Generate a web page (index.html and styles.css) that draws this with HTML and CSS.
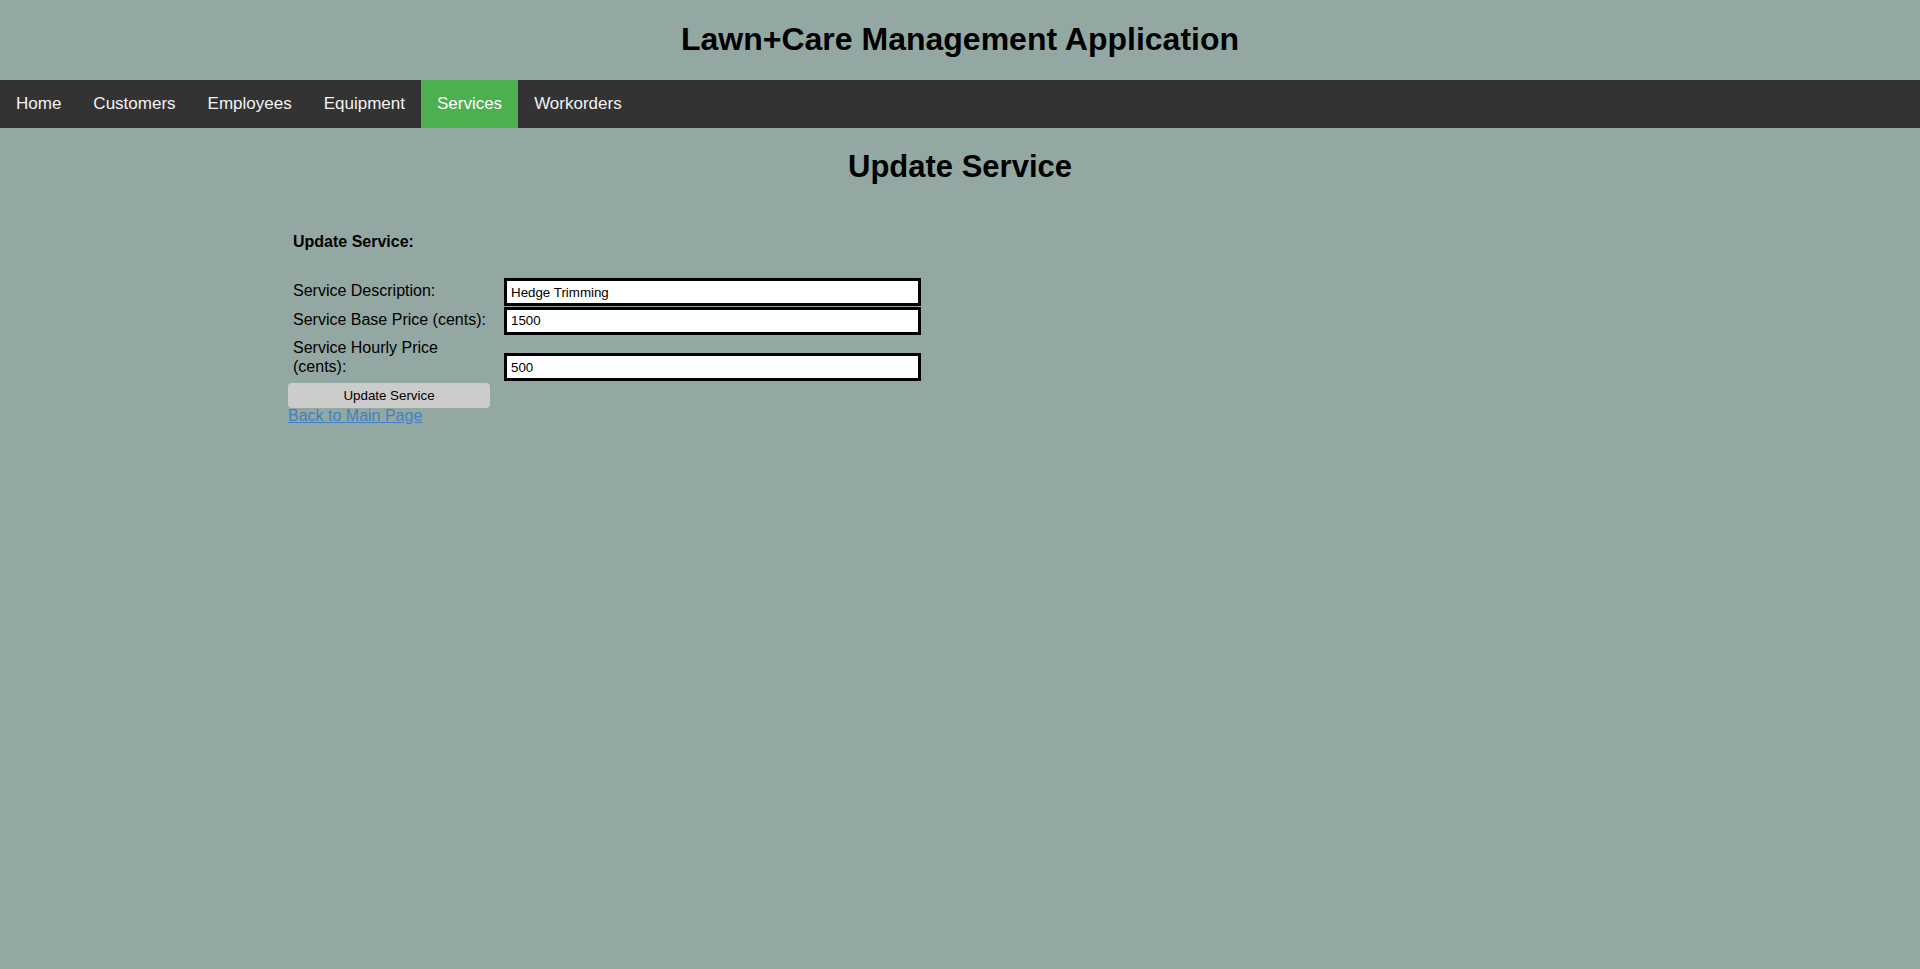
FILE: index.html
```html
<!DOCTYPE html>
<html lang="en">
<head>
<meta charset="utf-8">
<title>Update Service</title>
<link rel="stylesheet" href="styles.css">
</head>
<body>
<header class="site-header">
  <h1 class="site-title">Lawn+Care Management Application</h1>
</header>
<nav class="topnav">
  <a href="#" class="nav-link">Home</a>
  <a href="#" class="nav-link">Customers</a>
  <a href="#" class="nav-link">Employees</a>
  <a href="#" class="nav-link">Equipment</a>
  <a href="#" class="nav-link active">Services</a>
  <a href="#" class="nav-link">Workorders</a>
</nav>
<main class="content">
  <h1 class="page-title">Update Service</h1>
  <form class="service-form">
    <p class="form-heading">Update Service:</p>
    <div class="form-row">
      <label class="form-label" for="desc">Service Description:</label>
      <input class="form-input" id="desc" type="text" value="Hedge Trimming">
    </div>
    <div class="form-row">
      <label class="form-label" for="base">Service Base Price (cents):</label>
      <input class="form-input" id="base" type="text" value="1500">
    </div>
    <div class="form-row">
      <label class="form-label" for="hourly">Service Hourly Price (cents):</label>
      <input class="form-input" id="hourly" type="text" value="500">
    </div>
    <button class="submit-btn" type="button">Update Service</button>
    <a href="#" class="back-link">Back to Main Page</a>
  </form>
</main>
</body>
</html>
```
FILE: styles.css
```css
html, body {
  margin: 0;
  padding: 0;
}

html {
  background: #93a8a2;
}

body {
  font-family: "Liberation Sans", Arial, sans-serif;
  color: #000;
}

.site-header {
  text-align: center;
}

.site-title {
  font-size: 32px;
  font-weight: bold;
  margin: 0;
  padding: 21.4px 0;
}

.topnav {
  display: flex;
  background: #333333;
}

.nav-link {
  display: block;
  color: #f2f2f2;
  text-align: center;
  padding: 14px 16px;
  font-size: 17px;
  text-decoration: none;
}

.nav-link.active {
  background: #4caf50;
  color: #ffffff;
}

.content {
  padding-left: 288px;
}

.page-title {
  text-align: center;
  font-size: 31px;
  font-weight: bold;
  margin: 20.8px 0 0 -288px;
  padding-bottom: 20.8px;
}

.service-form {
  display: flex;
  flex-direction: column;
  align-items: flex-start;
  padding-top: 28px;
}

.form-heading {
  font-size: 16px;
  font-weight: bold;
  margin: 0 0 26px;
  padding-left: 5px;
  line-height: 18.4px;
}

.form-row {
  display: grid;
  grid-template-columns: 211px 417px;
  padding-left: 5px;
}

.form-label {
  font-size: 16px;
  line-height: 18.4px;
  padding: 4.5px 14px 5.5px 0;
  color: #000;
}

.form-input {
  align-self: end;
  box-sizing: border-box;
  width: 417px;
  height: 28px;
  margin: 0;
  border: 3px solid #000;
  background: #fff;
  padding: 0 4px;
  font-family: "Liberation Sans", Arial, sans-serif;
  font-size: 13.33px;
  color: #000;
  outline: none;
}

.submit-btn {
  display: block;
  width: 202px;
  height: 24.5px;
  margin-top: 2px;
  border: none;
  border-radius: 4px;
  background: #cccccc;
  font-family: "Liberation Sans", Arial, sans-serif;
  font-size: 13.33px;
  color: #000;
  padding: 0;
}

.back-link {
  display: block;
  font-size: 16px;
  line-height: 18.4px;
  margin-top: -1px;
  color: #4280c6;
  text-decoration: underline;
}
```
